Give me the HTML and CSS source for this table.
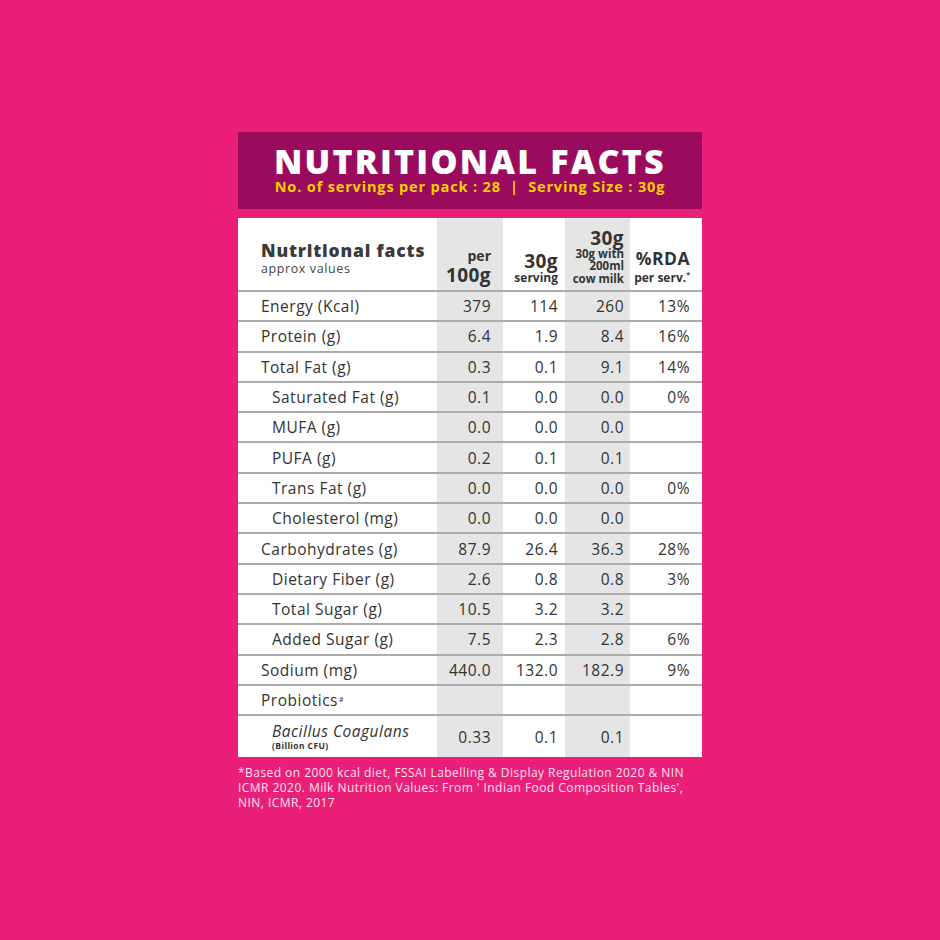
FILE: index.html
```html
<!DOCTYPE html>
<html lang="en">
<head>
<meta charset="utf-8">
<title>Nutritional Facts</title>
<link rel="stylesheet" href="styles.css">
</head>
<body>
<div class="card">
  <div class="banner">
    <h1 class="title">NUTRITIONAL FACTS</h1>
    <p class="subtitle">No. of servings per pack : 28 &nbsp;|&nbsp; Serving Size : 30g</p>
  </div>
  <div class="table">
    <div class="row head">
      <div class="cell name">
        <span class="h-main">Nutritional facts</span>
        <span class="h-sub">approx values</span>
      </div>
      <div class="cell c1 grey"><span class="h-per">per</span><span class="h-big">100g</span></div>
      <div class="cell c2"><span class="h-big">30g</span><span class="h-small">serving</span></div>
      <div class="cell c3 grey"><span class="h-big">30g</span><span class="h-small tight">30g with<br>200ml<br>cow milk</span></div>
      <div class="cell c4"><span class="h-rda">%RDA</span><span class="h-small">per serv.<sup>*</sup></span></div>
    </div>
    <div class="row"><div class="cell name">Energy (Kcal)</div><div class="cell c1 grey">379</div><div class="cell c2">114</div><div class="cell c3 grey">260</div><div class="cell c4">13%</div></div>
    <div class="row"><div class="cell name">Protein (g)</div><div class="cell c1 grey">6.4</div><div class="cell c2">1.9</div><div class="cell c3 grey">8.4</div><div class="cell c4">16%</div></div>
    <div class="row"><div class="cell name">Total Fat (g)</div><div class="cell c1 grey">0.3</div><div class="cell c2">0.1</div><div class="cell c3 grey">9.1</div><div class="cell c4">14%</div></div>
    <div class="row"><div class="cell name sub">Saturated Fat (g)</div><div class="cell c1 grey">0.1</div><div class="cell c2">0.0</div><div class="cell c3 grey">0.0</div><div class="cell c4">0%</div></div>
    <div class="row"><div class="cell name sub">MUFA (g)</div><div class="cell c1 grey">0.0</div><div class="cell c2">0.0</div><div class="cell c3 grey">0.0</div><div class="cell c4"></div></div>
    <div class="row"><div class="cell name sub">PUFA (g)</div><div class="cell c1 grey">0.2</div><div class="cell c2">0.1</div><div class="cell c3 grey">0.1</div><div class="cell c4"></div></div>
    <div class="row"><div class="cell name sub">Trans Fat (g)</div><div class="cell c1 grey">0.0</div><div class="cell c2">0.0</div><div class="cell c3 grey">0.0</div><div class="cell c4">0%</div></div>
    <div class="row"><div class="cell name sub">Cholesterol (mg)</div><div class="cell c1 grey">0.0</div><div class="cell c2">0.0</div><div class="cell c3 grey">0.0</div><div class="cell c4"></div></div>
    <div class="row"><div class="cell name">Carbohydrates (g)</div><div class="cell c1 grey">87.9</div><div class="cell c2">26.4</div><div class="cell c3 grey">36.3</div><div class="cell c4">28%</div></div>
    <div class="row"><div class="cell name sub">Dietary Fiber (g)</div><div class="cell c1 grey">2.6</div><div class="cell c2">0.8</div><div class="cell c3 grey">0.8</div><div class="cell c4">3%</div></div>
    <div class="row"><div class="cell name sub">Total Sugar (g)</div><div class="cell c1 grey">10.5</div><div class="cell c2">3.2</div><div class="cell c3 grey">3.2</div><div class="cell c4"></div></div>
    <div class="row"><div class="cell name sub">Added Sugar (g)</div><div class="cell c1 grey">7.5</div><div class="cell c2">2.3</div><div class="cell c3 grey">2.8</div><div class="cell c4">6%</div></div>
    <div class="row"><div class="cell name">Sodium (mg)</div><div class="cell c1 grey">440.0</div><div class="cell c2">132.0</div><div class="cell c3 grey">182.9</div><div class="cell c4">9%</div></div>
    <div class="row"><div class="cell name">Probiotics<sup class="mark">#</sup></div><div class="cell c1 grey"></div><div class="cell c2"></div><div class="cell c3 grey"></div><div class="cell c4"></div></div>
    <div class="row last">
      <div class="cell name sub stack"><span class="italic">Bacillus Coagulans</span><span class="tiny">(Billion CFU)</span></div>
      <div class="cell c1 grey">0.33</div><div class="cell c2">0.1</div><div class="cell c3 grey">0.1</div><div class="cell c4"></div>
    </div>
  </div>
  <p class="note">*Based on 2000 kcal diet, FSSAI Labelling &amp; Display Regulation 2020 &amp; NIN ICMR 2020. Milk Nutrition Values: From ' Indian Food Composition Tables', NIN, ICMR, 2017</p>
</div>
</body>
</html>
```
FILE: styles.css
```css
html, body {
  margin: 0;
  padding: 0;
  background: #e91f78;
}
body {
  font-family: "Open Sans", "Lato", sans-serif;
  color: #333;
}
.card {
  width: 464px;
  margin: 132px auto 0;
}
.banner {
  background: #9a0b5e;
  height: 77px;
  box-sizing: border-box;
  padding-top: 12px;
  text-align: center;
}
.title {
  margin: 0;
  font-size: 34px;
  line-height: 34px;
  font-weight: 800;
  color: #fff;
  letter-spacing: 2.2px;
}
.subtitle {
  margin: 0;
  font-size: 14.5px;
  line-height: 18px;
  font-weight: 700;
  color: #fcd000;
  letter-spacing: 0.85px;
}
.table {
  margin-top: 9px;
  background: #fff;
}
.row {
  display: grid;
  grid-template-columns: 199px 66px 62px 65px 72px;
  height: 30.3px;
  box-sizing: border-box;
  border-top: 2px solid #ababab;
}
.row.head {
  height: 72px;
  border-top: none;
}
.row.last {
  height: 42.8px;
}
.cell {
  display: flex;
  align-items: center;
  justify-content: flex-end;
  font-size: 15.5px;
  letter-spacing: 0.5px;
  color: #333;
  font-weight: 500;
}
.grey {
  background: #e5e5e5;
}
.name {
  justify-content: flex-start;
  padding-left: 23px;
}
.name.sub {
  padding-left: 34px;
}
.c1 { padding-right: 12px; }
.c2 { padding-right: 7px; }
.c3 { padding-right: 6px; }
.c4 { padding-right: 12px; }
.head .cell {
  flex-direction: column;
  align-items: flex-end;
  justify-content: flex-end;
  padding-bottom: 5px;
  text-align: right;
  letter-spacing: 0;
}
.head .name {
  align-items: flex-start;
  justify-content: center;
  text-align: left;
  padding-bottom: 0;
  padding-top: 8px;
}
.h-main {
  font-size: 17.5px;
  font-weight: 800;
  color: #3a3a3a;
  line-height: 21px;
  letter-spacing: 0.8px;
}
.h-sub {
  font-size: 12.5px;
  font-weight: 500;
  color: #444;
  line-height: 15px;
  letter-spacing: 0.6px;
}
.h-big {
  font-size: 19px;
  font-weight: 700;
  line-height: 20px;
  color: #333;
  letter-spacing: 0.4px;
}
.h-per {
  font-size: 14px;
  font-weight: 700;
  line-height: 16px;
  color: #333;
  margin-bottom: 1px;
}
.h-small {
  font-size: 12px;
  font-weight: 700;
  line-height: 14px;
  color: #333;
}
.h-small.tight {
  font-size: 11.5px;
  line-height: 12.5px;
}
.c3 .h-big {
  line-height: 19px;
}
.h-rda {
  font-size: 17.5px;
  font-weight: 700;
  line-height: 20px;
  margin-bottom: 3px;
  letter-spacing: 0.5px;
}
.h-small sup {
  font-size: 7px;
  line-height: 0;
}
.mark {
  font-size: 7px;
  line-height: 0;
  vertical-align: 6px;
  margin-left: 1px;
}
.stack {
  flex-direction: column;
  align-items: flex-start;
  justify-content: center;
}
.italic {
  font-style: italic;
  line-height: 17px;
}
.tiny {
  font-size: 8.5px;
  font-weight: 700;
  line-height: 11px;
  letter-spacing: 0.4px;
}
.note {
  margin: 8px 0 0;
  color: #fde4ef;
  font-size: 12px;
  line-height: 15px;
  letter-spacing: 0.45px;
}
```
